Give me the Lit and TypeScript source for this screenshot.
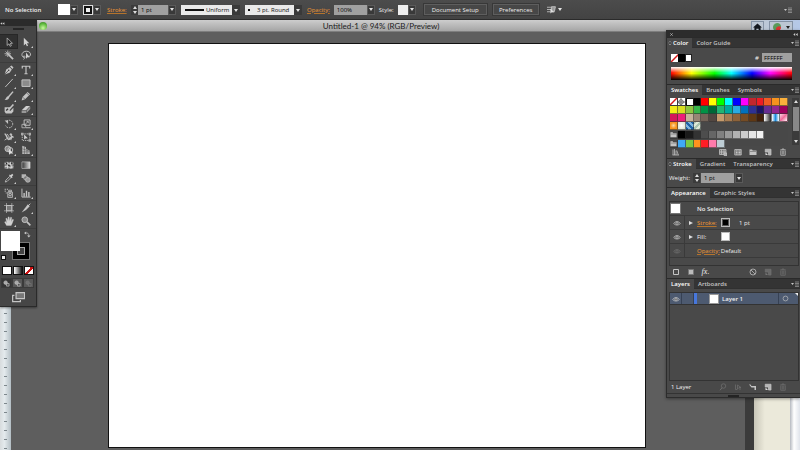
import { LitElement, html, svg, css } from "lit";
import { customElement } from "lit/decorators.js";

const base = css`
  *, *::before, *::after { box-sizing: border-box; }
  button, input, select { font: inherit; color: inherit; margin: 0; padding: 0; border: 0; border-radius: 0; background: none; appearance: none; outline: none; }
  button { display: flex; align-items: center; justify-content: center; flex: none; }
  svg { display: block; flex: none; }
  a { color: #f09a35; text-decoration: underline; text-decoration-thickness: 1px; text-decoration-color: #b5732c; }
  .stepper { display: flex; flex-direction: column; justify-content: center; gap: 2px; width: 7px; height: 10px; background: #3b3b3b; align-items: center; flex: none; }
  .stepper button { width: 5px; height: 3px; }
  .up::before { content: ""; border: 2px solid transparent; border-top: 0; border-bottom: 3px solid #ddd; }
  .down::before { content: ""; border: 2px solid transparent; border-bottom: 0; border-top: 3px solid #ddd; }
  .drop { width: 8px; height: 10px; background: #393939; box-shadow: 0 0 0 1px #5a5a5a inset; }
  .drop::before { content: ""; border: 2px solid transparent; border-bottom: 0; border-top: 3px solid #e4e4e4; }
  .num { width: 30px; height: 10px; padding: 0 3px; background: #a0a0a0; color: #000; }
`;

const icon = (body: unknown, size = 12) =>
  html`<svg width=${size} height=${size} viewBox="0 0 16 16" fill="none" stroke="#c4c4c4" stroke-width="1.5" aria-hidden="true">${body}</svg>`;

const I: Record<string, unknown> = {
  select: svg`<path d="M5 1.5v12l3-2.6 1.8 4 2-1-1.8-3.8h3.6z" fill="#222" stroke-width="1.2"/>`,
  direct: svg`<path d="M4.5 1v12.5l3-2.7 1.8 4 2-1-1.800-3.800h3.700z" fill="#d0d0d0" stroke="none"/>`,
  wand: svg`<path d="M7 7l7.500 7.500" stroke-width="2.800"/><path d="M6 .8v10.400M.8 6h10.400M2.400 2.400l7.200 7.200M9.600 2.400L2.400 9.600" stroke-width="1.300"/>`,
  lasso: svg`<path d="M5 12C1 11 .5 6.500 3 4s8.500-3 11 0 1 6-2 7M5 12c-2-1-1-3 .5-2.500S6 14 4 15"/><path d="M8 4v10l2.500-2.300H14z" fill="#d0d0d0" stroke="none"/>`,
  pen: svg`<path d="M1 15l2.500-8L9 3.500 12.500 7 9 12.500z" fill="#c4c4c4" stroke="none"/><path d="M9.500 2.500L12 .8 15.200 4l-1.700 2.500z" fill="#c4c4c4" stroke="none"/><path d="M1 15l6-6" stroke="#333" stroke-width="1"/><circle cx="7.500" cy="8.500" r="1.200" fill="#333" stroke="none"/>`,
  type: svg`<path d="M2 5.500V2h12v3.500M8 2v12M5.500 14h5" stroke-width="1.900"/>`,
  line: svg`<path d="M2 14.500L14 1.500"/>`,
  rect: svg`<path d="M1.500 3h13v10.500h-13z" fill="#8b8b8b"/>`,
  brush: svg`<path d="M14.500 1L7 9.500" stroke-width="2.400"/><path d="M8.500 10C8 13 5 15 .8 14c2.700-1 2.400-4.500 5-5.500z" fill="#c4c4c4" stroke="none"/>`,
  pencil: svg`<path d="M1 15l1.500-5.500L10.500 1.500 14.500 5 6.500 13z" fill="#c4c4c4" stroke="none"/><path d="M9 3l4 4M3 10l3 3" stroke="#444" stroke-width="1"/>`,
  blob: svg`<path d="M1 5h5l5 0-3 4 2 2 5-5v6L12 15H3l-2-2.500z" fill="#c4c4c4" stroke="none"/><path d="M15 .8L6.500 10.500" stroke-width="2.600"/><path d="M3.500 10.500l3-3" stroke="#333" stroke-width="2"/>`,
  eraser: svg`<path d="M1 10l7-7h6.500L8 10z" fill="#d0d0d0" stroke="none"/><path d="M1 10.800h7v3.700H1zM8.800 10.500l6-6.500v4l-6 6.500z" fill="#979797" stroke="none"/>`,
  rotate: svg`<path d="M4 3.500a6 6 0 1 1-1.500 7" stroke-dasharray="2.600 1.400"/><path d="M1 2.500h5.500V8z" fill="#c4c4c4" stroke="none"/>`,
  scale: svg`<path d="M5 1.500h9.500V10H5z"/><path d="M1.500 8.500h6v5.500h-6zM7 8l4.500-4M9 4h2.700v2.700" stroke-width="1.200"/><path d="M8 14h7.500" />`,
  width: svg`<path d="M1 3c2 0 3 3 4 6s3 4 5 1 3-4 5-1" stroke-width="2.400"/><path d="M1 13l6-4 4 4M5 3l4 6M12 4v8" stroke-width="1.400"/><circle cx="11" cy="4" r="1.300" fill="#c4c4c4"/>`,
  free: svg`<path d="M2 3h12v10.500H2z" stroke-dasharray="2 1.500"/><path d="M5 4v8l2-1.800L11 10z" fill="#d0d0d0" stroke="none"/><path d="M0 1h4v4H0zM12 1h4v4h-4zM12 11.500h4v4h-4z" fill="#aaa" stroke="none"/>`,
  shape: svg`<circle cx="6" cy="6" r="4.500" fill="#888"/><circle cx="10" cy="8" r="4"/><path d="M8 6v9.500l2.500-2H15z" fill="#ddd" stroke="none"/>`,
  perspective: svg`<path d="M2 1l6 2v3l6 3v5.500H2z" fill="#b9b9b9" stroke="none"/><path d="M2 6l12 4M2 11h12M5.500 2v13M9.500 4v11" stroke="#505050" stroke-width=".8"/>`,
  mesh: svg`<path d="M1 3h14v11H1z" fill="#888" stroke="none"/><path d="M1 6c5-3 8 3 14 0M1 11c5-3 8 3 14 0M5 3c-2 4 3 7 0 11M11 3c-2 4 3 7 0 11" stroke="#ddd"/><path d="M3 4l2 3M12 4l1 3M7 8l2 2" stroke="#222" stroke-width="2"/>`,
  gradient: svg`<defs><linearGradient id="tg"><stop stop-color="#333"/><stop offset="1" stop-color="#ddd"/></linearGradient></defs><path d="M1.500 3h13v10.500h-13z" fill="url(#tg)" stroke-width="1"/>`,
  eyedrop: svg`<path d="M2 14.500l1-3L9 5.500 11 7.500 5 13.500z" stroke-width="1.300"/><path d="M8 3.500l1.500-1 1.200 1L13 1l2 2-2.300 2.500 1 1.200-1.200 1.500z" fill="#d0d0d0" stroke="none"/>`,
  blend: svg`<path d="M1 2h7v6H1z" fill="#b5b5b5" stroke="none"/><circle cx="7.500" cy="8" r="3.300" fill="#777" stroke-width="1"/><circle cx="11" cy="11" r="3.800" fill="#999" stroke-width="1.200"/>`,
  spray: svg`<path d="M6 6.500h7.500V15H6zM7.500 3.500H12V6H7.500z" fill="#555" stroke-width="1.300"/><circle cx="9.800" cy="10.500" r="2" /><path d="M1 2h2M4.500 2h2M1 5h2M2.800 8h1.500" stroke-width="1.600"/>`,
  graph: svg`<path d="M1.500 1v13.500H15.500"/><path d="M5 14V8M8.800 14V4.500M12.600 14V6.500" stroke-width="2.200"/>`,
  artboard: svg`<path d="M4 4h8.500v8.500H4z" fill="#777"/><path d="M0 4h16M0 12.500h16M4 0v16M12.500 0v16" stroke-width="1"/>`,
  slice: svg`<path d="M1 15L11 2l3 3-6 6z" fill="#c4c4c4" stroke="none"/><path d="M10.500 5.500L15 1"/>`,
  hand: svg`<path d="M4 15L1 9.500l1.300-.8L4.500 11 3 4l1.600-.4L6.500 8V1.500h1.700L9 8l1.600-6 1.600.4L11.500 9l2.300-4 1.500.8L13 12l-1.500 3z" fill="#d0d0d0" stroke="#d0d0d0" stroke-width=".6"/>`,
  zoom: svg`<circle cx="6" cy="6" r="4.500" fill="#888"/><path d="M9.500 9.500l5.500 5.500" stroke-width="2.600"/>`,
  swap: svg`<path d="M3 5c6-2 8 1 8 6"/><path d="M5 1v7L0 4.500zM7 10h8l-4 5z" fill="#c4c4c4" stroke="none"/>`,
  screen: svg`<path d="M5 2h10.500v7.500H5z" fill="#777"/><path d="M3 5.500H.8v7.500h9.500v-2"/>`,
  circles: svg`<circle cx="6" cy="6" r="4" fill="#aaa"/><path d="M8 8h6v6H8z" fill="#555"/>`,
  eye: svg`<path d="M1.500 9C4 4 12 4 14.500 9c-2 4-11 4-13 0z"/><circle cx="8" cy="8.500" r="2.400" fill="#555"/>`,
  menu: svg`<path d="M0 6h6l-3 4z" fill="#c4c4c4" stroke="none"/><path d="M8 4h8M8 7h8M8 10h8M8 13h8" stroke-width="1"/>`,
  folder: svg`<path d="M1 3h5l1.500 2H15v9H1z" fill="#c4c4c4" stroke="none"/><path d="M2 7h12" stroke="#555" stroke-width="1"/>`,
  create: svg`<path d="M2.500 2.500H14V14H9V8H2.500z" fill="#b5b5b5" /><path d="M3 9l5 5H3z" fill="#ddd" stroke="none"/>`,
  trash: svg`<path d="M2 4h12M6 4V2h4v2"/><path d="M3.500 6v8.500h9V6M6.500 6v7M9.500 6v7"/>`,
  library: svg`<path d="M2 3v11M5 2v12M8 5v9M9.500 5l3 9M1 14h13"/>`,
  kinds: svg`<path d="M1 3h13v10H1zM1 8h13M5 3v10M10 3v10" fill="#777"/><path d="M10 10h6v5h-6z" fill="#aaa"/>`,
  options: svg`<path d="M1.500 3h13v11h-13z" fill="#777"/><path d="M4 6h3M9 6h4M4 9h3M9 9h4M4 12h3M9 12h4" stroke="#ddd"/>`,
  square: svg`<path d="M3 3h10v10H3z" stroke-width="2"/>`,
  filled: svg`<path d="M3 3h10v10H3z" fill="#bbb" stroke="#777" stroke-width="2"/>`,
  clear: svg`<circle cx="8" cy="8" r="6"/><path d="M4 4l8 8"/>`,
  sublayer: svg`<path d="M0 3h3l2 3h9v8h-3V9H5z" fill="#c4c4c4" stroke="none"/>`,
  mask: svg`<path d="M3 3v10h4M7 4v8l3-3h4zM12 9v5"/>`,
  locate: svg`<circle cx="9" cy="6" r="4.500"/><path d="M6 9.500L2 14.500" stroke-width="2"/>`,
  target: svg`<circle cx="8" cy="8" r="5.500"/>`,
  home: svg`<path d="M8 1l8 7h-2.500v7H10v-5H6v5H2.500V8H0z" fill="#14181f" stroke="none"/>`,
  align: svg`<path d="M0 4h8M0 8h8M0 12h6"/><path d="M8 3h7l-2 9H8z" fill="#999"/><path d="M6 6v9l2.500-2H13z" fill="#ddd" stroke="none"/>`,
};

@customElement("control-bar")
export class ControlBar extends LitElement {
  static styles = [base, css`
    :host { display: flex; align-items: center; height: 20px; padding: 0 8px 0 5px; background: linear-gradient(#4c4c4c, #434343); border-bottom: 1px solid #2b2b2b; color: #f0f0f0; white-space: nowrap; }
    .state { width: 53px; font-weight: 600; }
    .chip { height: 11px; width: 12px; background: #fff; }
    .ring { width: 10px; height: 10px; background: #eee; border: 1px solid #ddd; box-shadow: 0 0 0 2px #111 inset; }
    .caption { width: 24px; margin-left: 6px; }
    .gap { margin-left: 4px; }
    .wide { margin-left: 5px; }
    .combo { position: relative; display: flex; height: 10px; }
    .combo::after { content: ""; position: absolute; right: 0; width: 8px; height: 10px; background: #393939; }
    .combo::before { content: ""; position: absolute; z-index: 1; right: 2px; top: 4px; border: 2px solid transparent; border-bottom: 0; border-top: 3px solid #e4e4e4; }
    .combo select { height: 10px; background: #e9e9e9; color: #111; padding: 0; }
    .uniform select { width: 59px; padding-left: 25px; background: linear-gradient(#111, #111) 4px 4px / 19px 2px no-repeat #e9e9e9; }
    .round select { width: 57px; padding-left: 12px; background: radial-gradient(circle, #111 1px, transparent 1px) 2px 3px / 4px 4px no-repeat #e9e9e9; }
    .percent { width: 33px; }
    .style { width: 10px; height: 10px; background: #eee; }
    .push { height: 11px; border: 1px solid #5e5e5e; background: #474747; outline: 1px solid #383838; }
    .setup { width: 63px; margin-left: 8px; }
    .prefs { width: 46px; margin-left: 6px; }
    .plain { width: 8px; background: none; box-shadow: none; }
    .align { margin-left: 8px; }
    .end { margin-left: auto; }
  `];
  render() {
    return html`
      <span class="state">No Selection</span>
      <button class="chip" aria-label="Fill"></button><button class="drop" aria-label="Fill options"></button>
      <button class="ring wide" aria-label="Stroke colour"></button><button class="drop" aria-label="Stroke options"></button>
      <a class="caption" href="#stroke">Stroke:</a>
      <span class="stepper"><button class="up" aria-label="Increase"></button><button class="down" aria-label="Decrease"></button></span>
      <input class="num" aria-label="Stroke weight" value="1 pt"><button class="drop" aria-label="Weights"></button>
      <label class="combo uniform wide"><select aria-label="Width profile"><option>Uniform</option></select></label>
      <label class="combo round wide"><select aria-label="Brush"><option>3 pt. Round</option></select></label>
      <a class="wide" href="#opacity">Opacity:</a>
      <input class="num percent gap" aria-label="Opacity" value="100%"><button class="drop" aria-label="Opacity values"></button>
      <span class="gap">Style:</span><button class="style gap" aria-label="Graphic style"></button><button class="drop" aria-label="Styles"></button>
      <button class="push setup">Document Setup</button>
      <button class="push prefs">Preferences</button>
      <button class="align" aria-label="Select similar">${icon(I.align, 9)}</button><button class="drop plain" aria-label="Similar options"></button>
      <button class="end" aria-label="Bar menu">${icon(I.menu, 8)}</button>`;
  }
}

@customElement("tool-palette")
export class ToolPalette extends LitElement {
  static styles = [base, css`
    :host { display: block; width: 37px; background: #464646; border-right: 1px solid #2a2a2a; border-bottom: 1px solid #2a2a2a; box-shadow: 0 1px 2px #0006; }
    .head { height: 6px; background: #2b2b2b; display: flex; align-items: center; }
    .grip { width: 11px; height: 2px; margin: 2px auto 5px; background: #262626; }
    .group { display: grid; grid-template-columns: 17px 17px; padding: 0 1px 1px 0; border-bottom: 1px solid #3c3c3c; }
    .tool { height: 13px; position: relative; }
    .tool svg { width: 10px; height: 10px; }
    .more::after { content: ""; position: absolute; right: 1px; bottom: 0; border-left: 2px solid transparent; border-bottom: 2px solid #ccc; }
    .on { background: #303030; box-shadow: 0 0 0 1px #272727; }
    .paint { position: relative; height: 36px; margin-top: 1px; }
    .stroke { position: absolute; left: 12px; top: 12px; width: 18px; height: 18px; background: #444; border: 1px solid #777; box-shadow: 0 0 0 4px #000 inset, 0 0 0 5px #aaa inset; }
    .fill { position: absolute; left: 1px; top: 1px; width: 19px; height: 20px; background: #fff; }
    .swap { position: absolute; left: 24px; top: 1px; }
    .reset { position: absolute; left: 1px; top: 25px; width: 5px; height: 5px; background: #eee; border: 1px solid #111; }
    .modes { display: flex; justify-content: space-between; padding: 0 2px; }
    .modes button { width: 10px; height: 9px; border: 1px solid #111; background: #fff; }
    .modes .grad { background: linear-gradient(90deg, #fff, #111); }
    .modes .none { background: linear-gradient(135deg, #fff 40%, #c11 40% 60%, #fff 60%); }
    .draw { display: flex; padding: 3px 2px 0 1px; }
    .draw button { flex: 1; height: 10px; border: 1px solid #3a3a3a; background: #595959; }
    .draw .sel { background: #353535; }
    .draw .off svg { opacity: .3; }
    .screen { margin: 1px auto 0; height: 17px; width: 16px; }
  `];
  groups = [
    ["select", "direct", "wand", "lasso"],
    ["pen", "type", "line", "rect", "brush", "pencil", "blob", "eraser"],
    ["rotate", "scale", "width", "free", "shape", "perspective"],
    ["mesh", "gradient", "eyedrop", "blend"],
    ["spray", "graph"],
    ["artboard", "slice", "hand", "zoom"],
  ];
  single = ["select", "wand", "lasso", "free", "mesh", "gradient", "blend", "blob", "artboard", "zoom"];
  render() {
    return html`
      <div class="head">${icon(svg`<path d="M7 4v8L1 8zM14 4v8L8 8z" fill="#ccc" stroke="none"/>`, 5)}</div>
      <div class="grip"></div>
      ${this.groups.map((g) => html`<div class="group">${g.map((n) => html`
        <button class="tool ${n === "select" ? "on" : ""} ${this.single.includes(n) ? "" : "more"}" aria-label=${n}>${icon(I[n])}</button>`)}</div>`)}
      <div class="paint">
        <button class="stroke" aria-label="Stroke"></button><button class="fill" aria-label="Fill"></button>
        <button class="swap" aria-label="Swap">${icon(I.swap, 7)}</button><button class="reset" aria-label="Default colours"></button>
      </div>
      <div class="modes"><button aria-label="Color"></button><button class="grad" aria-label="Gradient"></button><button class="none" aria-label="None"></button></div>
      <div class="draw">${["sel", "", "off"].map((c) => html`<button class=${c} aria-label="Drawing mode">${icon(I.circles, 7)}</button>`)}</div>
      <button class="screen" aria-label="Screen mode">${icon(I.screen, 13)}</button>`;
  }
}

const SWATCHES: string[][] = [
  ["none", "reg", "#fff", "#000", "#f00", "#ff0", "#0f0", "#0ff", "#00f", "#f0f", "#c1272d", "#ed1c24", "#f15a24", "#f7931e", "#fbb03b"],
  ["#f2ec18", "#d9e021", "#8cc63f", "#39b54a", "#009245", "#006837", "#22b573", "#00a99d", "#29abe2", "#0071bc", "#2e3192", "#1b1464", "#662d91", "#93278f", "#9e005d"],
  ["#d4145a", "#ed1e79", "#c7b299", "#998675", "#736357", "#534741", "#c69c6d", "#a67c52", "#8c6239", "#754c24", "#603813", "#42210b",
    "linear-gradient(90deg,#fff,#222)", "linear-gradient(90deg,#fff,#1b8de0 50%,#fff)", "linear-gradient(135deg,#fbd5e4,#f06a9b,#fff)"],
  ["radial-gradient(#fdd9a5,#f7931e 60%)", "radial-gradient(#fff,#d8e0cc)", "repeating-linear-gradient(45deg,#1e62a8 0 2px,#7db4de 2px 4px)", "repeating-linear-gradient(135deg,#a9c4b0 0 2px,#dfe8d8 2px 4px)"],
  ["folder", "#000", "#1a1a1a", "#333", "#4d4d4d", "#666", "#808080", "#999", "#b3b3b3", "#ccc", "#e6e6e6", "#f2f2f2"],
  ["folder", "#3fa9f5", "#7ac943", "#ff931e", "#ff1d25", "#ff7bac", "#bdccd4"],
];
const noneIcon = html`<svg width="8" height="8" viewBox="0 0 8 8" aria-hidden="true"><path d="M0 0h8v8H0z" fill="#fff"/><path d="M0 8L8 0" stroke="#d31a1a" stroke-width="1.5"/></svg>`;
const regIcon = html`<svg width="8" height="8" viewBox="0 0 8 8" aria-hidden="true"><path d="M0 0h8v8H0z" fill="#fff"/><circle cx="4" cy="4" r="2.300" fill="none" stroke="#444" stroke-width=".8"/><path d="M4 0v8M0 4h8" stroke="#444" stroke-width=".8"/></svg>`;

@customElement("panel-dock")
export class PanelDock extends LitElement {
  static styles = [base, css`
    :host { display: block; width: 134px; background: #494949; border: 1px solid #2c2c2c; border-right: 0; color: #f0f0f0; box-shadow: 0 1px 3px #0006; }
    .head { height: 6px; background: #2c2c2c; display: flex; align-items: center; justify-content: space-between; padding: 0 2px; }
    .tabs { display: flex; height: 11px; background: #343434; border-bottom: 1px solid #303030; border-top: 1px solid #2a2a2a; font-weight: 600; padding-right: 1px; align-items: stretch; }
    .tabs button { padding: 0 4px; color: #c4c4c4; }
    .tabs .on { background: #494949; color: #fff; height: 10px; }
    .tabs .tight { padding-left: 1px; gap: 1px; }
    .tabs .menu { margin-left: auto; padding: 0; }
    .row { display: flex; align-items: center; }
    .color { height: 36px; padding: 5px 8px 0 4px; }
    .color .row { height: 9px; }
    .mini { width: 7px; height: 8px; overflow: hidden; }
    .black { background: #000; }
    .white { background: #fff; border: 1px solid #222; }
    .hash { margin-left: auto; margin-right: 3px; }
    .hex { width: 30px; height: 9px; padding: 0 2px; background: #a0a0a0; color: #000; }
    .spectrum { width: 100%; height: 13px; margin-top: 5px; background: linear-gradient(#fff, transparent 45%, transparent 50%, #000), linear-gradient(90deg, #f00, #ff0 17%, #0f0 36%, #0ff 50%, #00f 67%, #f0f 82%, #f00); }
    .swatches { display: flex; height: 51px; padding: 3px 1px 0 3px; gap: 4px; }
    .grid { flex: 1; background: #484848; }
    .line { display: grid; grid-template-columns: repeat(15, 1fr); height: 8px; }
    .group { margin-top: 1px; }
    .sw { width: auto; height: 8px; border-right: 1px solid #3339; border-bottom: 1px solid #3339; overflow: hidden; }
    .pick { border: 1px solid #111; }
    .scroll { width: 7px; height: 47px; display: flex; flex-direction: column; justify-content: space-between; align-items: center; background: #3b3b3b; padding: 2px 0; }
    .thumb { width: 6px; flex: 1; margin: 4px 0 9px; background: #888; }
    .bar { display: flex; align-items: center; height: 12px; padding: 0 13px 0 4px; }
    .bar button { width: 9px; }
    .bar .push { margin-left: auto; }
    .bar .sp { margin-left: 6px; }
    .bar .dim { opacity: .3; }
    .weight { height: 18px; padding-left: 2px; gap: 1px; }
    .weight span:first-child { width: 23px; }
    .weight .num { width: 33px; }
    .list { margin: 3px 1px 0 2px; border: 1px solid #333; }
    .item { height: 14px; border-bottom: 1px solid #3a3a3a; }
    .vis { width: 15px; height: 13px; border-right: 1px solid #3a3a3a; }
    .vis.off svg { opacity: .3; }
    .tri, .blank { width: 12px; height: 13px; }
    .tri::before { content: ""; border: 2px solid transparent; border-right: 0; border-left: 4px solid #ddd; }
    .name { width: 24px; }
    .thumbnail { width: 11px; height: 11px; background: #fff; border: 1px solid #777; }
    .sel { margin-left: 16px; font-weight: 600; }
    .box { width: 9px; height: 9px; border: 1px solid #bbb; background: #fff; margin-right: 9px; }
    .box.k { background: #000; box-shadow: 0 0 0 1px #555 inset; }
    .opacity { margin-right: 1px; }
    .rest { height: 7px; }
    .layers { height: 89px; }
    .layer { height: 12px; background: #4d5a70; border-bottom: 1px solid #333; font-weight: 600; }
    .layer .vis { width: 12px; height: 11px; border-color: #364154; }
    .edit { width: 12px; height: 11px; border-right: 1px solid #364154; }
    .stripe { width: 3px; height: 11px; background: #4777dc; margin-right: 12px; }
    .art { width: 10px; height: 10px; background: #fff; border: 1px solid #999; margin-right: 3px; }
    .target { margin-left: auto; width: 14px; height: 11px; border-left: 1px solid #364154; }
    .corner { align-self: flex-start; margin-left: 3px; border-left: 3px solid transparent; border-top: 3px solid #eee; width: 3px; height: 3px; }
    .count { flex: 1; }
    .foot { height: 4px; border-top: 1px solid #333; display: flex; justify-content: center; align-items: center; }
    .foot::before { content: ""; width: 11px; height: 2px; background: #242424; }
    .fx { font-style: italic; font-size: 8px; font-family: "Liberation Serif", serif; }
  `];
  tabs(names: string[], diamond = false) {
    return html`<div class="tabs" role="tablist">${names.map((n, i) => html`
      <button role="tab" class="${i ? "" : "on"} ${!i && diamond ? "tight" : ""}">${!i && diamond ? icon(svg`<path d="M3 6l5-5 5 5M3 11l5 5 5-5" stroke-width="2"/>`, 4) : ""}${n}</button>`)}
      <button class="menu" aria-label="Panel menu">${icon(I.menu, 8)}</button></div>`;
  }
  swatch(c: string, first: boolean) {
    if (c === "folder") return html`<button class="sw" aria-label="Group">${icon(I.folder, 7)}</button>`;
    if (c === "none") return html`<button class="sw" aria-label="None">${noneIcon}</button>`;
    if (c === "reg") return html`<button class="sw" aria-label="Registration">${regIcon}</button>`;
    return html`<button class="sw ${first ? "pick" : ""}" aria-label="Swatch" style="background:${c}"></button>`;
  }
  btn(n: string, label: string, cls = "") {
    return html`<button class=${cls} aria-label=${label}>${icon(I[n], 8)}</button>`;
  }
  render() {
    return html`
      <div class="head">${icon(svg`<path d="M4 4l8 8M12 4l-8 8" stroke-width="2"/>`, 5)}${icon(svg`<path d="M7 3v10L1 8zM15 3v10L9 8z" fill="#ccc" stroke="none"/>`, 5)}</div>
      ${this.tabs(["Color", "Color Guide"], true)}
      <div class="color">
        <div class="row"><button class="mini" aria-label="None">${noneIcon}</button><button class="mini black" aria-label="Black"></button><button class="mini white" aria-label="White"></button>
          <label class="hash" for="hex">#</label><input id="hex" class="hex" value="FFFFFF"></div>
        <button class="spectrum" aria-label="Color spectrum"></button>
      </div>
      ${this.tabs(["Swatches", "Brushes", "Symbols"])}
      <div class="swatches">
        <div class="grid">${SWATCHES.map((r, y) => html`<div class="line ${r[0] === "folder" ? "group" : ""}">${r.map((c, x) => this.swatch(c, y === 0 && x === 2))}</div>`)}</div>
        <div class="scroll"><button class="up" aria-label="Scroll up"></button><div class="thumb"></div><button class="down" aria-label="Scroll down"></button></div>
      </div>
      <div class="bar">${this.btn("library", "Libraries")}${this.btn("kinds", "Kinds", "push")}${this.btn("options", "Options", "sp")}${this.btn("folder", "New group", "sp")}${this.btn("create", "New swatch", "sp")}${this.btn("trash", "Delete", "sp")}</div>
      ${this.tabs(["Stroke", "Gradient", "Transparency"], true)}
      <div class="row weight"><span>Weight:</span><span class="stepper"><button class="up" aria-label="Increase"></button><button class="down" aria-label="Decrease"></button></span><input class="num" aria-label="Weight" value="1 pt"><button class="drop" aria-label="Weights"></button></div>
      ${this.tabs(["Appearance", "Graphic Styles"])}
      <div class="list">
        <div class="row item"><span class="thumbnail"></span><span class="sel">No Selection</span></div>
        <div class="row item"><button class="vis" aria-label="Toggle">${icon(I.eye, 8)}</button><button class="tri" aria-label="Expand"></button><span class="name"><a href="#stroke">Stroke:</a></span><button class="box k" aria-label="Stroke colour"></button>1 pt</div>
        <div class="row item"><button class="vis" aria-label="Toggle">${icon(I.eye, 8)}</button><button class="tri" aria-label="Expand"></button><span class="name">Fill:</span><button class="box" aria-label="Fill colour"></button></div>
        <div class="row item"><button class="vis off" aria-label="Toggle">${icon(I.eye, 8)}</button><span class="blank"></span><a class="opacity" href="#opacity">Opacity:</a>Default</div>
        <div class="rest"></div>
      </div>
      <div class="bar">${this.btn("square", "New stroke")}${this.btn("filled", "New fill", "sp")}<button class="sp fx" aria-label="Add effect">fx.</button>${this.btn("clear", "Clear", "push")}${this.btn("create", "Duplicate", "sp dim")}${this.btn("trash", "Delete", "sp dim")}</div>
      ${this.tabs(["Layers", "Artboards"])}
      <div class="list layers">
        <div class="row layer"><button class="vis" aria-label="Toggle layer">${icon(I.eye, 8)}</button><span class="edit"></span><span class="stripe"></span><span class="art"></span>Layer 1<button class="target" aria-label="Target">${icon(I.target, 7)}</button><span class="corner"></span></div>
      </div>
      <div class="bar"><span class="count">1 Layer</span>${this.btn("locate", "Locate", "dim")}${this.btn("mask", "Clipping mask", "sp dim")}${this.btn("sublayer", "New sublayer", "sp")}${this.btn("create", "New layer", "sp")}${this.btn("trash", "Delete", "sp dim")}</div>
      <div class="foot"></div>`;
  }
}

@customElement("app-root")
export class AppRoot extends LitElement {
  static styles = [base, css`
    :host { display: flex; flex-direction: column; min-height: 100vh; overflow: hidden; font: 6px/8px "Open Sans", "Noto Sans", sans-serif; background: #5e5e5e; }
    .stage { position: relative; flex: 1; display: flex; flex-direction: column; }
    .top { display: flex; height: 12px; padding-left: 11px; background: #c4ccd8; }
    .title { flex: 1; display: flex; align-items: center; justify-content: center; background: linear-gradient(#cdcdcd, #a5a5a5); border-bottom: 1px solid #7e7e7e; color: #222; font: 8px/10px Lato, sans-serif; position: relative; }
    .light { position: absolute; left: 28px; top: 2px; width: 8px; height: 8px; border-radius: 50%; background: radial-gradient(circle at 50% 75%, #c9f7a0, #5cb83a 60%, #37752a); }
    .browser { width: 49px; display: flex; gap: 5px; align-items: flex-end; background: linear-gradient(90deg, #bfc7d0, #b4c8e8); }
    .browser button { height: 11px; background: #bcc6d3; border: 1px solid #8492a5; border-bottom: 0; }
    .home { width: 13px; }
    .site { width: 24px; gap: 5px; }
    .dot { width: 8px; height: 8px; border-radius: 50%; background: radial-gradient(circle at 75% 80%, #d33 30%, #59995a 40% 70%, #ddd); }
    .tri { border: 2px solid transparent; border-bottom: 0; border-top: 3px solid #222; }
    .work { flex: 1; display: grid; grid-template-columns: 11px 1fr 55px; }
    .ruler { background: repeating-linear-gradient(#0000 0 8px, #7d878c 8px 9px) 4px 3px / 3px 9px repeat-y, linear-gradient(90deg, #d7dbdd, #e4eaed 40%, #b3bec4); }
    .canvas { display: flex; padding: 11px 99px 2px 97px; background: #5e5e5e; }
    .artboard { flex: 1; background: #fff; border: 1px solid #111; }
    .behind { display: grid; grid-template-columns: 9px 1fr 10px; }
    .edge { background: #3b3b3b; }
    .paper { background: linear-gradient(90deg, #c8c6b8, #ebe9da 30%, #ebe9da); }
    .gutter { background: linear-gradient(90deg, #b5b9c0, #fff 40%, #dfe3ea); }
    .tools { position: absolute; left: 0; top: 0; }
    .dock { position: absolute; right: 0; top: 10px; }
  `];
  render() {
    return html`
      <control-bar></control-bar>
      <div class="stage">
        <div class="top">
          <div class="title"><button class="light" aria-label="Zoom window"></button>Untitled-1 @ 94% (RGB/Preview)</div>
          <div class="browser"><button class="home" aria-label="Home">${icon(I.home, 9)}</button><button class="site" aria-label="Site"><span class="dot"></span><span class="tri"></span></button></div>
        </div>
        <div class="work">
          <div class="ruler"></div>
          <div class="canvas"><div class="artboard"></div></div>
          <div class="behind"><div class="edge"></div><div class="paper"></div><div class="gutter"></div></div>
        </div>
        <tool-palette class="tools"></tool-palette>
        <panel-dock class="dock"></panel-dock>
      </div>`;
  }
}
